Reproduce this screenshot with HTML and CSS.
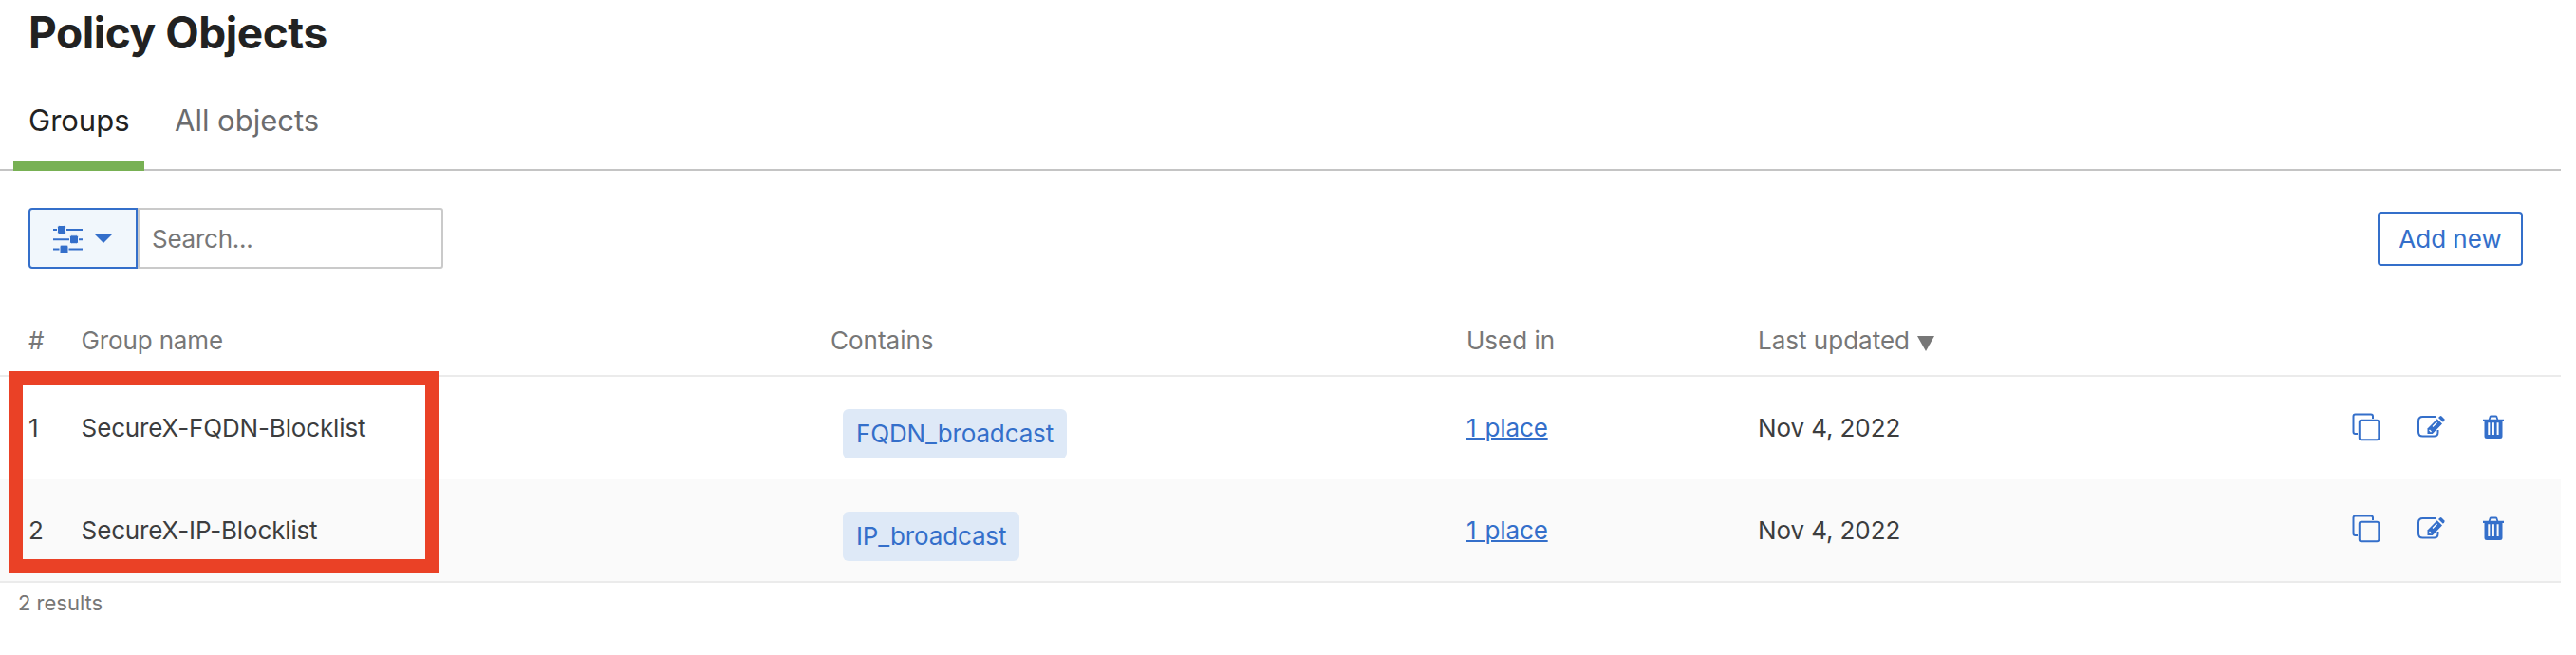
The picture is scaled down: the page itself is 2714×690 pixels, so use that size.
FILE: index.html
```
<!DOCTYPE html>
<html lang="en">
<head>
<meta charset="utf-8">
<title>Policy Objects</title>
<link rel="stylesheet" href="styles.css">
</head>
<body>
<svg class="sprite" width="0" height="0">
  <symbol id="copy" viewBox="0 0 30 30">
    <path d="M6 22H3.500Q1.500 22 1.500 20V3.500Q1.500 1.500 3.500 1.500H20Q22 1.500 22 3.500V6" fill="none" stroke="currentColor" stroke-width="2"/>
    <rect x="7.800" y="7.800" width="20.500" height="20.500" rx="2" fill="none" stroke="currentColor" stroke-width="2"/>
  </symbol>
  <symbol id="edit" viewBox="0 0 30 26">
    <path d="M20 2H6.500Q2 2 2 6.500V18Q2 22.500 6.500 22.500H18.500Q22.500 22.500 22.500 18.500V16" fill="none" stroke="currentColor" stroke-width="2"/>
    <path d="M11.500 20V14.500L21.700 4.300L27 9.500L16.800 20Z" fill="currentColor"/>
    <path d="M23 3L24.600 1.400Q25.500 .7 26.500 1.600L29.200 4.300Q30 5.200 29.200 6.200L27.900 7.700Z" fill="currentColor"/>
    <path d="M17 12.500L21.500 8M13.500 16L15.500 18" fill="none" stroke="#fff" stroke-width="1.300"/>
  </symbol>
  <symbol id="trash" viewBox="0 0 24 26">
    <path d="M7.500 5.500L8.500 2.200Q8.800 1.500 9.500 1.500H14.500Q15.200 1.500 15.500 2.200L16.500 5.500" fill="none" stroke="currentColor" stroke-width="1.800"/>
    <path fill-rule="evenodd" d="M1 4.800H23V7H21.500V22.500Q21.500 25 19 25H5Q2.500 25 2.500 22.500V7H1ZM6.300 8.300V21H8.300V8.300ZM10.900 8.300V21H12.900V8.300ZM15.600 8.300V21H17.600V8.300Z" fill="currentColor"/>
  </symbol>
</svg>
<main class="page">
  <h1 class="title">Policy Objects</h1>
  <nav class="tabs">
    <a class="tab tab-active">Groups</a>
    <a class="tab">All objects</a>
  </nav>
  <div class="toolbar">
    <div class="search">
      <button class="filter" aria-label="Filter">
        <svg width="32" height="30" viewBox="0 0 32 30" fill="currentColor">
          <path d="M0 4H31V6H0ZM0 14.300H31V16.300H0ZM0 24.600H31V26.600H0Z"/>
          <g stroke="#f1f7fc" stroke-width="1"><rect x="4.500" y=".5" width="9" height="9" rx="1.800"/><rect x="17.500" y="10.800" width="9" height="9" rx="1.800"/><rect x="7" y="21.100" width="9" height="9" rx="1.800"/></g>
        </svg>
        <svg class="caret" width="20" height="10" viewBox="0 0 20 10"><path d="M0 0H20L10 10Z" fill="currentColor"/></svg>
      </button>
      <input class="search-input" type="text" placeholder="Search...">
    </div>
    <button class="add">Add new</button>
  </div>
  <section class="table">
    <div class="row head">
      <span>#</span><span class="name">Group name</span><span>Contains</span><span>Used in</span>
      <span>Last updated<svg class="sort" width="18" height="16" viewBox="0 0 18 16"><path d="M0 0H18L9 16Z" fill="currentColor"/></svg></span>
    </div>
    <div class="row">
      <span>1</span><span class="name">SecureX-FQDN-Blocklist</span><span class="chips"><span class="chip">FQDN_broadcast</span></span><span><a class="link">1 place</a></span><span class="date">Nov 4, 2022</span>
      <span class="actions"><svg class="i-copy"><use href="#copy"/></svg><svg class="i-edit"><use href="#edit"/></svg><svg class="i-trash"><use href="#trash"/></svg></span>
    </div>
    <div class="row row-alt">
      <span>2</span><span class="name">SecureX-IP-Blocklist</span><span class="chips"><span class="chip">IP_broadcast</span></span><span><a class="link">1 place</a></span><span class="date">Nov 4, 2022</span>
      <span class="actions"><svg class="i-copy"><use href="#copy"/></svg><svg class="i-edit"><use href="#edit"/></svg><svg class="i-trash"><use href="#trash"/></svg></span>
    </div>
    <div class="highlight"></div>
  </section>
  <p class="results">2 results</p>
</main>
</body>
</html>
```
FILE: styles.css
```
* { box-sizing: border-box; }
body { margin: 0; background: #fff; color: #3c3d3e; font: 26px/32px Inter, "Liberation Sans", sans-serif; }
.sprite { display: block; }
.page { width: 2698px; height: 690px; }
.title { margin: 0; padding: 6px 0 0 30px; height: 90px; color: #222; font-size: 46px; line-height: 56px; font-weight: 700; letter-spacing: -.45px; }
.tabs { display: flex; gap: 16px; height: 90px; padding-left: 14px; border-bottom: 2px solid #c4c4c4; }
.tab { height: 90px; padding: 17px 16px 0; color: #6b6c6e; font-size: 31px; line-height: 40px; }
.tab-active { color: #222; width: 138px; border-bottom: 10px solid #78b154; }
.toolbar { display: flex; justify-content: space-between; align-items: flex-start; padding: 39px 40px 0 30px; height: 150px; }
.search { display: flex; }
.filter { display: flex; align-items: center; width: 115px; height: 64px; padding: 2px 0 0 24px; border: 2px solid #346fca; border-radius: 4px 0 0 4px; background: #f1f7fc; color: #346fca; }
.caret { margin: -3px 0 0 11px; }
.search-input { width: 322px; height: 64px; padding: 0 13px; border: 2px solid #cacaca; border-radius: 0 3px 3px 0; font: inherit; letter-spacing: -.25px; }
.search-input::placeholder { color: #777; opacity: 1; }
.add { width: 153px; height: 57px; margin-top: 4px; padding: 0; border: 2px solid #346fca; border-radius: 4px; background: #fff; color: #346fca; font: inherit; }
.table { position: relative; }
.row { display: grid; grid-template-columns: 56px 789px 670px 307px 1fr 220px; height: 108px; padding: 38px 0 0 30px; }
.head { height: 67px; padding-top: 13px; color: #777; border-bottom: 2px solid #ebebeb; }
.row-alt { height: 109px; background: #fafafa; border-bottom: 2px solid #ebebeb; }
.row-alt .actions { margin-top: -1px; }
.name { margin-left: -.4px; letter-spacing: -.15px; }
.date { letter-spacing: -.1px; }
.sort { margin: 0 0 -2px 8px; }
.chips { padding-left: 13px; margin-top: -4px; }
.chip { display: inline-block; height: 52px; padding: 10px 14px; border-radius: 6px; background: #dee9f7; color: #346fca; letter-spacing: -.13px; }
.link { color: #346fca; text-decoration: underline; text-decoration-thickness: 2px; letter-spacing: -.15px; word-spacing: 2px; }
.actions { display: flex; color: #346fca; }
.i-copy { width: 30px; height: 30px; }
.i-edit { width: 30px; height: 26px; margin: 2px 0 0 38px; }
.i-trash { width: 24px; height: 26px; margin: 2px 0 0 39px; }
.highlight { position: absolute; left: 9px; top: 61px; width: 454px; height: 213px; border: 15px solid #ea4126; }
.results { margin: 0; padding: 6px 0 0 19px; color: #777; font-size: 22px; line-height: 30px; }
```
